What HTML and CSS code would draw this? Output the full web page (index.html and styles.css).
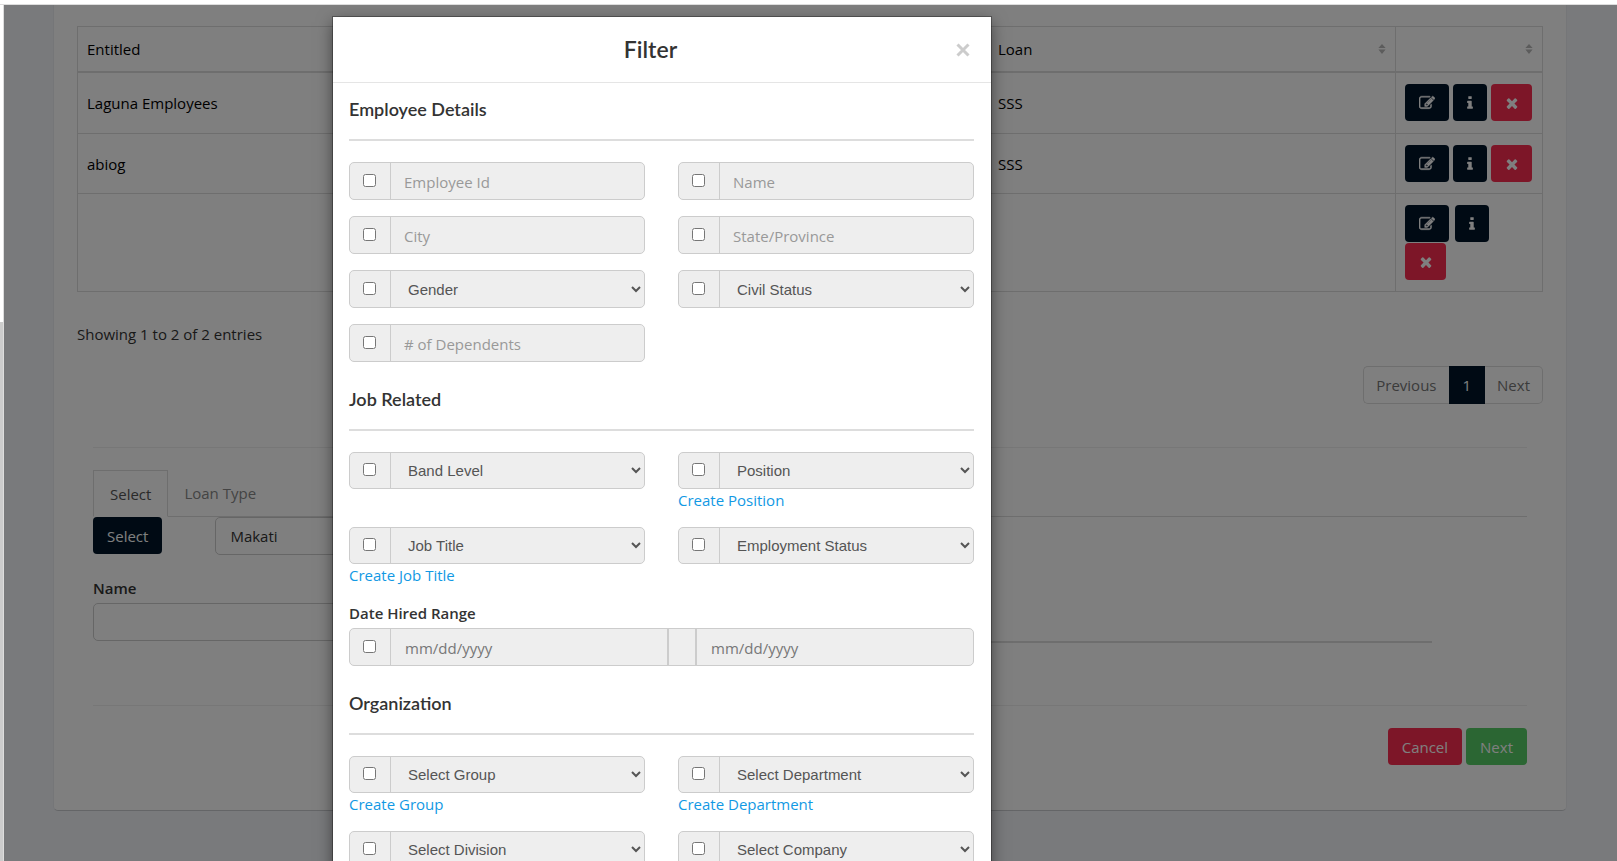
FILE: index.html
```html
<!DOCTYPE html>
<html lang="en">
<head>
<meta charset="utf-8">
<title>Loans</title>
<link rel="stylesheet" href="styles.css">
</head>
<body>
<svg class="sprite" aria-hidden="true">
  <symbol id="i-edit" viewBox="0 0 1792 1792"><path d="M888 1184l116-116-152-152-116 116v56h96v96h56zm440-720q-16-16-33 1l-350 350q-17 17-1 33t33-1l350-350q17-17 1-33zm80 594v190q0 119-84.5 203.5t-203.5 84.5h-832q-119 0-203.5-84.5t-84.5-203.5v-832q0-119 84.5-203.5t203.5-84.5h832q63 0 117 25 15 7 18 23 3 17-9 29l-49 49q-14 14-32 8-23-6-45-6h-832q-66 0-113 47t-47 113v832q0 66 47 113t113 47h832q66 0 113-47t47-113v-126q0-13 9-22l64-64q15-15 35-7t20 29zm-96-738l288 288-672 672h-288v-288zm444 132l-92 92-288-288 92-92q28-28 68-28t68 28l152 152q28 28 28 68t-28 68z"/></symbol>
  <symbol id="i-info" viewBox="0 0 1792 1792"><path d="M1216 1344v128q0 26-19 45t-45 19h-512q-26 0-45-19t-19-45v-128q0-26 19-45t45-19h64v-384h-64q-26 0-45-19t-19-45v-128q0-26 19-45t45-19h384q26 0 45 19t19 45v576h64q26 0 45 19t19 45zm-128-1152v192q0 26-19 45t-45 19h-256q-26 0-45-19t-19-45v-192q0-26 19-45t45-19h256q26 0 45 19t19 45z"/></symbol>
  <symbol id="i-times" viewBox="0 0 1792 1792"><path d="M1490 1322q0 40-28 68l-136 136q-28 28-68 28t-68-28l-294-294-294 294q-28 28-68 28t-68-28l-136-136q-28-28-28-68t28-68l294-294-294-294q-28-28-28-68t28-68l136-136q28-28 68-28t68 28l294 294 294-294q28-28 68-28t68 28l136 136q28 28 28 68t-28 68l-294 294 294 294q28 28 28 68z"/></symbol>
  <symbol id="i-sort" viewBox="0 0 8 10"><path d="M4 0L7.600 4H.4zM4 10L.4 5.600h7.200z"/></symbol>
</svg>

<div class="topbar"></div>
<div class="shell">
  <div class="side"><div class="side-thumb"></div></div>
  <main class="page">
    <section class="card">
      <table class="loans">
        <colgroup><col><col class="col-loan"><col class="col-actions"></colgroup>
        <thead>
          <tr>
            <th><div class="th">Entitled</div></th>
            <th><div class="th">Loan <svg class="sort"><use href="#i-sort"/></svg></div></th>
            <th><div class="th end"><svg class="sort"><use href="#i-sort"/></svg></div></th>
          </tr>
        </thead>
        <tbody>
          <tr>
            <td>Laguna Employees</td><td>SSS</td>
            <td><div class="actions">
              <button class="btn dark" aria-label="Edit"><svg class="icon edit"><use href="#i-edit"/></svg></button>
              <button class="btn dark slim" aria-label="Info"><svg class="icon"><use href="#i-info"/></svg></button>
              <button class="btn red mid" aria-label="Delete"><svg class="icon"><use href="#i-times"/></svg></button>
            </div></td>
          </tr>
          <tr>
            <td>abiog</td><td>SSS</td>
            <td><div class="actions">
              <button class="btn dark" aria-label="Edit"><svg class="icon edit"><use href="#i-edit"/></svg></button>
              <button class="btn dark slim" aria-label="Info"><svg class="icon"><use href="#i-info"/></svg></button>
              <button class="btn red mid" aria-label="Delete"><svg class="icon"><use href="#i-times"/></svg></button>
            </div></td>
          </tr>
          <tr>
            <td></td><td></td>
            <td><div class="actions wide">
              <button class="btn dark" aria-label="Edit"><svg class="icon edit"><use href="#i-edit"/></svg></button>
              <button class="btn dark slim" aria-label="Info"><svg class="icon"><use href="#i-info"/></svg></button>
              <button class="btn red mid" aria-label="Delete"><svg class="icon"><use href="#i-times"/></svg></button>
            </div></td>
          </tr>
        </tbody>
      </table>
      <p class="count">Showing 1 to 2 of 2 entries</p>
      <nav class="pager">
        <a href="#">Previous</a><a href="#" class="on">1</a><a href="#">Next</a>
      </nav>
      <div class="wizard">
        <nav class="tabs"><a href="#" class="on">Select</a><a href="#">Loan Type</a></nav>
        <div class="pick">
          <button class="btn dark text">Select</button>
          <input class="field" type="text" value="Makati" aria-label="Selected location">
        </div>
        <div class="name-row">
          <div class="name-field">
            <label for="name">Name</label>
            <input class="field" id="name" type="text">
          </div>
          <div class="name-line"></div>
        </div>
        <div class="footer">
          <button class="btn red text">Cancel</button>
          <button class="btn green text">Next</button>
        </div>
      </div>
    </section>
  </main>
  <div class="backdrop">
    <div class="modal" role="dialog" aria-labelledby="title">
      <header class="modal-head">
        <h1 id="title">Filter</h1>
        <button class="close" aria-label="Close"><svg viewBox="0 0 14 14"><path d="M1.500 1.500l11 11M12.500 1.500l-11 11"/></svg></button>
      </header>
      <div class="modal-body">
        <h2>Employee Details</h2>
        <div class="grid tall">
          <div class="group"><span class="tick"><input type="checkbox" aria-label="Use employee id"></span><input type="text" placeholder="Employee Id" aria-label="Employee Id"></div>
          <div class="group"><span class="tick"><input type="checkbox" aria-label="Use name"></span><input type="text" placeholder="Name" aria-label="Name"></div>
          <div class="group"><span class="tick"><input type="checkbox" aria-label="Use city"></span><input type="text" placeholder="City" aria-label="City"></div>
          <div class="group"><span class="tick"><input type="checkbox" aria-label="Use state"></span><input type="text" placeholder="State/Province" aria-label="State/Province"></div>
          <div class="group"><span class="tick"><input type="checkbox" aria-label="Use gender"></span><select aria-label="Gender"><option>Gender</option></select></div>
          <div class="group"><span class="tick"><input type="checkbox" aria-label="Use civil status"></span><select aria-label="Civil Status"><option>Civil Status</option></select></div>
          <div class="group"><span class="tick"><input type="checkbox" aria-label="Use dependents"></span><input type="text" placeholder="# of Dependents" aria-label="# of Dependents"></div>
        </div>
        <h2>Job Related</h2>
        <div class="grid">
          <div><div class="group"><span class="tick"><input type="checkbox" aria-label="Use band level"></span><select aria-label="Band Level"><option>Band Level</option></select></div></div>
          <div><div class="group"><span class="tick"><input type="checkbox" aria-label="Use position"></span><select aria-label="Position"><option>Position</option></select></div><a class="create" href="#">Create Position</a></div>
          <div><div class="group"><span class="tick"><input type="checkbox" aria-label="Use job title"></span><select aria-label="Job Title"><option>Job Title</option></select></div><a class="create" href="#">Create Job Title</a></div>
          <div><div class="group"><span class="tick"><input type="checkbox" aria-label="Use employment status"></span><select aria-label="Employment Status"><option>Employment Status</option></select></div></div>
        </div>
        <div class="dates">
          <label for="from">Date Hired Range</label>
          <div class="group range">
            <span class="tick"><input type="checkbox" aria-label="Use date hired"></span>
            <input class="date" id="from" type="text" placeholder="mm/dd/yyyy">
            <span class="between"></span>
            <input class="date" type="text" placeholder="mm/dd/yyyy" aria-label="Date hired to">
          </div>
        </div>
        <h2>Organization</h2>
        <div class="grid">
          <div><div class="group"><span class="tick"><input type="checkbox" aria-label="Use group"></span><select aria-label="Group"><option>Select Group</option></select></div><a class="create" href="#">Create Group</a></div>
          <div><div class="group"><span class="tick"><input type="checkbox" aria-label="Use department"></span><select aria-label="Department"><option>Select Department</option></select></div><a class="create" href="#">Create Department</a></div>
          <div><div class="group"><span class="tick"><input type="checkbox" aria-label="Use division"></span><select aria-label="Division"><option>Select Division</option></select></div></div>
          <div><div class="group"><span class="tick"><input type="checkbox" aria-label="Use company"></span><select aria-label="Company"><option>Select Company</option></select></div></div>
        </div>
      </div>
    </div>
  </div>
</div>
</body>
</html>
```
FILE: styles.css
```css
* { box-sizing: border-box; }

body {
  margin: 0;
  height: 100vh;
  overflow: hidden;
  display: flex;
  flex-direction: column;
  font: 15px/22px "Open Sans", "Noto Sans", sans-serif;
  color: #333;
  background: #fff;
}

.sprite { display: none; }
a { text-decoration: none; }
button, input, select { font: inherit; margin: 0; }

.topbar {
  flex: 0 0 5px;
  border-bottom: 1px solid #ddd;
}

.shell {
  position: relative;
  flex: 1;
  min-height: 0;
  display: flex;
}

.side {
  flex: 0 0 4px;
  display: flex;
  flex-direction: column;
  justify-content: flex-end;
  border-right: 1px solid #ddd;
}
.side-thumb { height: 63%; background: #ccc; }

.page {
  flex: 1;
  padding: 0 50px 0 49px;
  background: #f2f4f8;
}

.card {
  padding: 21px 23px 45px;
  background: #fff;
  border: 1px solid #eaecf0;
  border-top: 0;
  border-bottom-color: #c8cacf;
  border-radius: 0 0 5px 5px;
}

.loans {
  width: 100%;
  table-layout: fixed;
  border-collapse: collapse;
  color: #000;
}
.col-loan { width: 407px; }
.col-actions { width: 147px; }
.loans th, .loans td {
  padding: 11px 9px;
  border: 1px solid #dcdcdc;
  text-align: left;
  font-weight: 400;
}
.loans th { border-bottom-width: 2px; }
.loans tbody tr:first-child td { padding-bottom: 12px; }
.th {
  display: flex;
  align-items: center;
  justify-content: space-between;
}
.th.end { justify-content: flex-end; min-height: 22px; }
.sort { width: 8px; height: 10px; fill: #b8b8b8; }

.actions { display: flex; gap: 4px; }
.actions.wide { flex-wrap: wrap; gap: 1px 6px; }

.btn {
  display: flex;
  align-items: center;
  justify-content: center;
  width: 44px;
  height: 37px;
  padding: 0;
  border: 0;
  border-radius: 4px;
  color: #fff;
}
.slim { width: 34px; }
.mid { width: 41px; }
.text { width: auto; padding: 0 14px; }
.dark { background: #001529; }
.red { background: #fb2d50; }
.green { background: #56cc66; }
.icon { width: 16px; height: 16px; fill: currentColor; }
.edit { stroke: currentColor; stroke-width: 50; }

.count { margin: 31px 0 21px; }

.pager { display: flex; justify-content: flex-end; }
.pager a {
  padding: 7px 12px;
  border: solid #ddd;
  border-width: 1px 0;
  color: #777;
}
.pager a:first-child { border-left-width: 1px; border-radius: 5px 0 0 5px; }
.pager a:last-child { border-right-width: 1px; border-radius: 0 5px 5px 0; }
.pager a.on { padding: 7px 14px; background: #001529; border-color: #001529; color: #fff; }

.wizard {
  margin: 43px 16px 0;
  padding-top: 22px;
  border-top: 1px solid #eee;
}
.tabs { display: flex; border-bottom: 1px solid #ddd; }
.tabs a { padding: 12px 16px 11px; color: #888; }
.tabs a.on {
  margin-bottom: -1px;
  border: 1px solid #ddd;
  border-bottom-color: #fff;
  color: #555;
}
.pick { display: flex; gap: 53px; }
.pick .field { width: 300px; }
.field {
  height: 38px;
  padding: 0 14px;
  border: 1px solid #ccc;
  border-radius: 5px;
  background: #fff;
  color: #333;
}
.name-row {
  display: flex;
  align-items: flex-end;
  gap: 32px;
  margin-top: 22px;
  padding-right: 95px;
}
.name-field { flex: 0 0 420px; margin-bottom: 2px; }
.name-field label, .dates label {
  display: block;
  margin-bottom: 4px;
  font-weight: 600;
}
.name-field .field { display: block; width: 100%; }
.name-line { flex: 1; height: 2px; background: #ddd; }
.footer {
  display: flex;
  justify-content: flex-end;
  gap: 4px;
  margin-top: 62px;
  padding-top: 22px;
  border-top: 1px solid #eee;
}

.backdrop {
  position: absolute;
  inset: 0 0 0 4px;
  padding: 12px 0 0 329px;
  overflow: hidden;
  background: rgba(0, 0, 0, .5);
}
.modal {
  width: 658px;
  background: #fff;
  box-shadow: 0 0 0 1px rgba(0, 0, 0, .3), 0 5px 15px rgba(0, 0, 0, .5);
}
.modal-head {
  display: flex;
  align-items: center;
  padding: 16px 21px 16px 12px;
  border-bottom: 1px solid #e5e5e5;
}
.modal-head h1 {
  flex: 1;
  margin: 0;
  font: 600 23px/33px Lato, sans-serif;
  text-align: center;
}
.close {
  display: flex;
  padding: 0;
  border: 0;
  background: none;
}
.close svg {
  width: 14px;
  height: 14px;
  stroke: #ccc;
  stroke-width: 3;
}

.modal-body { padding: 15px 17px 16px 16px; }
.modal-body h2 {
  margin: 26px 0 21px;
  padding-bottom: 19px;
  border-bottom: 2px solid #ddd;
  font: 600 18px/22px Lato, sans-serif;
}
.modal-body h2:first-child { margin-top: 0; }

.grid {
  display: grid;
  grid-template-columns: 1fr 1fr;
  gap: 16px 33px;
}
.group {
  display: flex;
  height: 37px;
  border: 1px solid #ccc;
  border-radius: 5px;
  background: #eee;
  overflow: hidden;
}
.tall .group, .range { height: 38px; }
.tick {
  flex: 0 0 41px;
  display: flex;
  align-items: center;
  justify-content: center;
  padding: 0 1px 2px 0;
  border-right: 1px solid #ccc;
}
.tick input { width: 13px; height: 13px; }
.group > input, .group select {
  flex: 1;
  min-width: 0;
  border: 0;
  background: none;
  color: #555;
}
.group > input { padding: 1px 13px 0; }
.group > input::placeholder { color: #999; opacity: 1; }
.group > input.date { padding-left: 14px; }
.group > input.date::placeholder { color: #777; }
.group select {
  padding: 0 13px;
  font-family: "Liberation Sans", Arial, sans-serif;
}
.between {
  flex: 0 0 30px;
  border: solid #ccc;
  border-width: 0 2px;
}
.create { display: block; color: #1299e4; }
.dates { margin-top: 16px; }
```
